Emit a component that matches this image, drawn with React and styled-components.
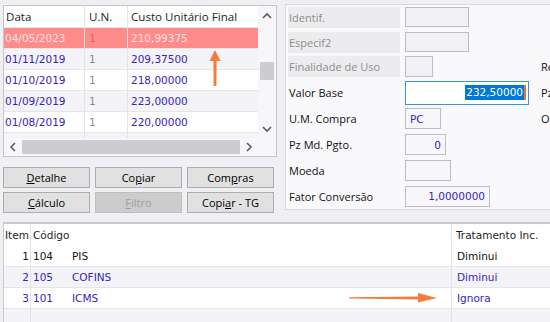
import React from "react";
import styled, { createGlobalStyle } from "styled-components";

const GlobalStyle = createGlobalStyle`
  html, body {
    margin: 0;
    padding: 0;
    background: #f0f0f4;
    overflow: hidden;
  }
  body {
    font-family: "Open Sans", "Noto Sans", sans-serif;
  }
`;

const UI = `"Open Sans", "Noto Sans", sans-serif`;
const GRID = `"DejaVu Sans", "Liberation Sans", sans-serif`;

const Page = styled.div`
  position: relative;
  width: 550px;
  height: 322px;
  overflow: hidden;
  padding: 4px 0 0 3px;
  box-sizing: border-box;
`;

const Top = styled.div`
  display: flex;
  align-items: flex-start;
  gap: 8px;
`;

const LeftCol = styled.div`
  width: 274px;
  margin-top: 1px;
  display: flex;
  flex-direction: column;
`;

const Table = styled.div`
  width: 274px;
  height: 152px;
  box-sizing: border-box;
  border: 1px solid #c6c6c9;
  background: #fff;
  display: grid;
  grid-template-columns: 1fr 18px;
  grid-template-rows: 1fr 18px;
  overflow: hidden;
`;

const DataArea = styled.div`
  overflow: hidden;
`;

const HeadRow = styled.div`
  display: grid;
  grid-template-columns: 80px 43px 1fr;
  height: 21px;
  align-items: center;
  font-family: ${UI};
  font-size: 11.6px;
  color: #1e1e1e;
`;

const HeadCell = styled.div`
  height: 100%;
  display: flex;
  align-items: center;
  padding-left: ${(p) => p.$pad || 3}px;
  border-left: ${(p) => (p.$first ? "none" : "1px solid #e4e4e8")};
  white-space: nowrap;
`;

const Row = styled.div`
  display: grid;
  grid-template-columns: 80px 43px 1fr;
  height: 21px;
  box-sizing: border-box;
  border-top: 1px solid #e6e6ea;
  background: ${(p) => (p.$hot ? "#ff8c8a" : p.$alt ? "#f3f3f8" : "#fff")};
  font-family: ${GRID};
  font-size: 10.5px;
  color: ${(p) => (p.$hot ? "#ffe4e4" : "#3325b8")};
`;

const Cell = styled.div`
  display: flex;
  align-items: center;
  padding-left: ${(p) => p.$pad || 3}px;
  border-left: ${(p) => (p.$first ? "none" : "1px solid #e4e4e8")};
  color: ${(p) => (p.$muted ? (p.$hot ? "#c86a6a" : "#8a8a8a") : "inherit")};
  white-space: nowrap;
`;

const VScroll = styled.div`
  background: #f7f7f9;
  display: flex;
  flex-direction: column;
  align-items: center;
  justify-content: space-between;
  padding: 6px 0 5px;
  box-sizing: border-box;
  position: relative;
`;

const VThumb = styled.div`
  position: absolute;
  left: 2px;
  top: 56px;
  width: 14px;
  height: 18px;
  background: #cdcdd0;
`;

const HScroll = styled.div`
  background: #f7f7f9;
  display: flex;
  align-items: center;
  padding: 0 5px 0 5px;
  gap: 5px;
`;

const HThumb = styled.div`
  flex: 1;
  height: 14px;
  background: #cdcdd0;
`;

const Corner = styled.div`
  background: #f7f7f9;
`;

const Chevron = ({ dir }) => {
  const pts = {
    up: "1,6 5,2 9,6",
    down: "1,2 5,6 9,2",
    left: "6,1 2,5 6,9",
    right: "2,1 6,5 2,9",
  }[dir];
  const vertical = dir === "up" || dir === "down";
  return (
    <svg width={vertical ? 10 : 8} height={vertical ? 8 : 10} viewBox={vertical ? "0 0 10 8" : "0 0 8 10"}>
      <polyline points={pts} fill="none" stroke="#5c5c60" strokeWidth="1.6" />
    </svg>
  );
};

const Buttons = styled.div`
  display: grid;
  grid-template-columns: repeat(3, 87px);
  column-gap: 5px;
  row-gap: 4px;
  margin-top: 10px;
`;

const Btn = styled.button`
  height: 21px;
  padding: 0;
  border: 1px solid ${(p) => (p.disabled ? "#bfbfbf" : "#adadad")};
  background: ${(p) => (p.disabled ? "#cccccc" : "#e1e1e1")};
  color: ${(p) => (p.disabled ? "#a0a0a0" : "#000")};
  font-family: ${UI};
  font-size: 11px;
  line-height: 19px;
`;

const Panel = styled.div`
  width: 290px;
  height: 206px;
  box-sizing: border-box;
  border: 1px solid #d9d9dd;
  background: #f9f9fb;
  padding: 0 0 0 2px;
  display: flex;
  flex-direction: column;
`;

const Field = styled.div`
  display: grid;
  grid-template-columns: 117px 135px auto;
  height: ${(p) => p.$h || 26}px;
  align-items: center;
`;

const Label = styled.div`
  width: 112px;
  height: 21px;
  display: flex;
  align-items: center;
  padding-left: 1px;
  box-sizing: border-box;
  background: ${(p) => (p.$off ? "#ececee" : "transparent")};
  color: ${(p) => (p.$off ? "#8c8c8e" : "#111")};
  font-family: ${UI};
  font-size: 11px;
  white-space: nowrap;
`;

const SideLabel = styled(Label)`
  background: transparent;
  width: auto;
`;

const Box = styled.div`
  width: ${(p) => p.$w}px;
  height: ${(p) => p.$h || 21}px;
  box-sizing: border-box;
  border: 1px solid ${(p) => (p.$focus ? "#3d8ee0" : "#bdbdc0")};
  background: ${(p) => (p.$focus ? "#fff" : p.$off ? "#f1f1f3" : "#f7f7f9")};
  display: flex;
  align-items: center;
  justify-content: ${(p) => (p.$right ? "flex-end" : "flex-start")};
  padding: 0 ${(p) => (p.$focus ? 2 : 4)}px 0 4px;
  font-family: ${GRID};
  font-size: 10.5px;
  color: #3325b8;
`;

const Selected = styled.span`
  background: #0078d7;
  color: #fff;
  line-height: 15px;
  padding: 0 1px;
`;

const Caret = styled.span`
  width: 2px;
  height: 15px;
  background: #e8741e;
`;

const Bottom = styled.div`
  margin-top: 9px;
  width: 560px;
  height: 110px;
  border-top: 2px solid #cacace;
  border-left: 1px solid #cacace;
  background: #fff;
  font-family: ${GRID};
  font-size: 10.5px;
`;

const BRow = styled.div`
  display: grid;
  grid-template-columns: 27px 420px 1fr;
  height: ${(p) => (p.$head ? 22 : 21)}px;
  box-sizing: border-box;
  border-bottom: ${(p) => (p.$head ? "none" : "1px solid #e6e6ea")};
  background: ${(p) => (p.$alt ? "#f3f3f8" : "#fff")};
  color: ${(p) => (p.$head ? "#1e1e1e" : p.$blue ? "#3325b8" : "#111")};
`;

const BCell = styled.div`
  display: flex;
  align-items: center;
  justify-content: ${(p) => (p.$right ? "flex-end" : "flex-start")};
  padding: 0 ${(p) => (p.$right ? 1 : 0)}px 0 ${(p) => p.$pad ?? 3}px;
  border-right: ${(p) => (p.$line ? "1px solid #e4e4e8" : "none")};
  border-left: ${(p) => (p.$split ? "1px solid #e4e4e8" : "none")};
  white-space: nowrap;
`;

const Code = styled.span`
  display: inline-block;
  width: 39px;
`;

const Arrows = styled.svg`
  position: absolute;
  inset: 0;
  pointer-events: none;
`;

const history = [
  { date: "04/05/2023", un: "1", cost: "210,99375", hot: true },
  { date: "01/11/2019", un: "1", cost: "209,37500" },
  { date: "01/10/2019", un: "1", cost: "218,00000" },
  { date: "01/09/2019", un: "1", cost: "223,00000" },
  { date: "01/08/2019", un: "1", cost: "220,00000" },
  { date: "", un: "", cost: "" },
];

const taxes = [
  { item: "1", code: "104", name: "PIS", trat: "Diminui" },
  { item: "2", code: "105", name: "COFINS", trat: "Diminui", blue: true },
  { item: "3", code: "101", name: "ICMS", trat: "Ignora", blue: true },
  { item: "", code: "", name: "", trat: "" },
];

export default function App() {
  return (
    <>
      <GlobalStyle />
      <Page>
        <Top>
          <LeftCol>
            <Table>
              <DataArea>
                <HeadRow>
                  <HeadCell $first $pad={2}>Data</HeadCell>
                  <HeadCell $pad={4}>U.N.</HeadCell>
                  <HeadCell>Custo Unitário Final</HeadCell>
                </HeadRow>
                {history.map((r, i) => (
                  <Row key={i} $hot={r.hot} $alt={i % 2 === 1}>
                    <Cell $first $pad={1}>{r.date}</Cell>
                    <Cell $pad={4} $muted $hot={r.hot}>{r.un}</Cell>
                    <Cell>{r.cost}</Cell>
                  </Row>
                ))}
              </DataArea>
              <VScroll>
                <Chevron dir="up" />
                <VThumb />
                <Chevron dir="down" />
              </VScroll>
              <HScroll>
                <Chevron dir="left" />
                <HThumb />
                <Chevron dir="right" />
              </HScroll>
              <Corner />
            </Table>
            <Buttons>
              <Btn><u>D</u>etalhe</Btn>
              <Btn>Co<u>p</u>iar</Btn>
              <Btn>Com<u>p</u>ras</Btn>
              <Btn><u>C</u>álculo</Btn>
              <Btn disabled><u>F</u>iltro</Btn>
              <Btn>Copi<u>a</u>r - TG</Btn>
            </Buttons>
          </LeftCol>
          <Panel>
            <Field $h={25}>
              <Label $off>Identif.</Label>
              <Box $w={64} $h={20} $off />
            </Field>
            <Field $h={25}>
              <Label $off>Especif2</Label>
              <Box $w={64} $h={20} $off />
            </Field>
            <Field $h={25}>
              <Label $off>Finalidade de Uso</Label>
              <Box $w={28} $h={21} $off />
              <SideLabel>Re</SideLabel>
            </Field>
            <Field $h={27}>
              <Label>Valor Base</Label>
              <Box $w={124} $h={24} $focus $right>
                <Selected>232,50000</Selected>
                <Caret />
              </Box>
              <SideLabel>Pz</SideLabel>
            </Field>
            <Field>
              <Label>U.M. Compra</Label>
              <Box $w={36}>PC</Box>
              <SideLabel>Ol</SideLabel>
            </Field>
            <Field>
              <Label>Pz Md. Pgto.</Label>
              <Box $w={41} $right>0</Box>
            </Field>
            <Field>
              <Label>Moeda</Label>
              <Box $w={46} />
            </Field>
            <Field>
              <Label>Fator Conversão</Label>
              <Box $w={85} $right>1,0000000</Box>
            </Field>
          </Panel>
        </Top>
        <Bottom>
          <BRow $head>
            <BCell $line $pad={1}>Item</BCell>
            <BCell $pad={2}>Código</BCell>
            <BCell $pad={4} $split>Tratamento Inc.</BCell>
          </BRow>
          {taxes.map((t, i) => (
            <BRow key={i} $alt={i % 2 === 1} $blue={t.blue}>
              <BCell $line $right>{t.item}</BCell>
              <BCell $pad={2}>
                <Code>{t.code}</Code>
                {t.name}
              </BCell>
              <BCell $pad={5} $split>{t.trat}</BCell>
            </BRow>
          ))}
        </Bottom>
        <Arrows width="550" height="322" viewBox="0 0 550 322">
          <polygon points="213.6,86 216.4,86 216.6,60 213.4,60" fill="#f47c3c" />
          <polygon points="209.5,61 215,50 220.5,61" fill="#f47c3c" />
          <polygon points="349,297.2 420,296.4 420,299.4 349,298.4" fill="#f47c3c" />
          <polygon points="418,293 437,298 418,302.6" fill="#f47c3c" />
        </Arrows>
      </Page>
    </>
  );
}
